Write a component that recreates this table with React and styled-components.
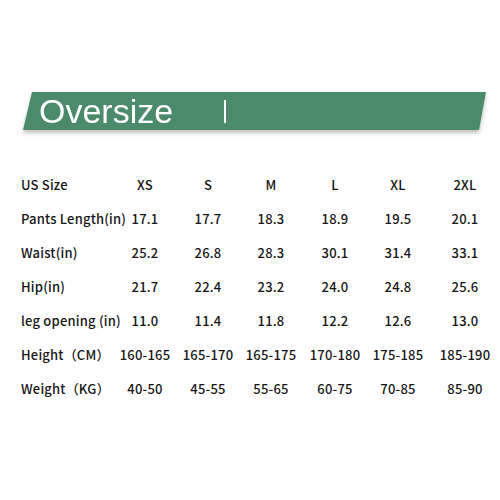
import React from 'react'
import styled, { createGlobalStyle } from 'styled-components';

const GlobalStyle = createGlobalStyle`
    html, body {
        margin: 0;
        padding: 0;
        background: #ffffff;
    }
`

const Page = styled.div`
    width: 500px;
    height: 500px;
    background: #ffffff;
    padding-top: 92px;
    box-sizing: border-box;
    overflow: hidden;
`

const BannerShadow = styled.div`
    margin-left: 23px;
    width: 463px;
    filter: drop-shadow(0 3px 2px rgba(0, 0, 0, 0.25));
`

const Banner = styled.div`
    height: 38px;
    background: #4b8a6b;
    clip-path: polygon(9px 0, 100% 0, 456px 100%, 0 100%);
    display: flex;
    align-items: center;
    padding-left: 16px;
    box-sizing: border-box;
`

const BannerTitle = styled.span`
    font-family: "Liberation Sans", Arial, sans-serif;
    font-size: 34px;
    color: #ffffff;
    line-height: 1;
    width: 185px;
`

const Divider = styled.span`
    width: 1.5px;
    height: 23px;
    background: #ffffff;
`

const Table = styled.div`
    margin-top: 37px;
    padding-left: 21px;
    display: grid;
    grid-template-columns: 91px repeat(6, 64px);
    grid-auto-rows: 34px;
    align-items: center;
    font-family: "Noto Sans CJK SC", "Noto Sans", sans-serif;
    font-size: 13px;
    font-weight: 500;
    letter-spacing: 0.2px;
    color: #161616;
`

const Label = styled.div`
    white-space: nowrap;
`

const Cell = styled.div`
    text-align: center;
    white-space: nowrap;
    transform: translateX(${p => p.$shift || 0}px);
`

const rows = [
    { label: 'US Size', values: ['XS', 'S', 'M', 'L', 'XL', '2XL'] },
    { label: 'Pants Length(in)', values: ['17.1', '17.7', '18.3', '18.9', '19.5', '20.1'] },
    { label: 'Waist(in)', values: ['25.2', '26.8', '28.3', '30.1', '31.4', '33.1'] },
    { label: 'Hip(in)', values: ['21.7', '22.4', '23.2', '24.0', '24.8', '25.6'] },
    { label: 'leg opening (in)', values: ['11.0', '11.4', '11.8', '12.2', '12.6', '13.0'] },
    { label: 'Height（CM）', values: ['160-165', '165-170', '165-175', '170-180', '175-185', '185-190'] },
    { label: 'Weight（KG）', values: ['40-50', '45-55', '55-65', '60-75', '70-85', '85-90'] },
]

const shifts = [1, 0, -1, -1, -2, 1]

function App() {
    return (
        <Page>
            <GlobalStyle />
            <BannerShadow>
                <Banner>
                    <BannerTitle>Oversize</BannerTitle>
                    <Divider />
                </Banner>
            </BannerShadow>
            <Table>
                {rows.map(row => (
                    <React.Fragment key={row.label}>
                        <Label>{row.label}</Label>
                        {row.values.map((v, i) => (
                            <Cell key={i} $shift={shifts[i]}>{v}</Cell>
                        ))}
                    </React.Fragment>
                ))}
            </Table>
        </Page>
    );
}

export default App;
